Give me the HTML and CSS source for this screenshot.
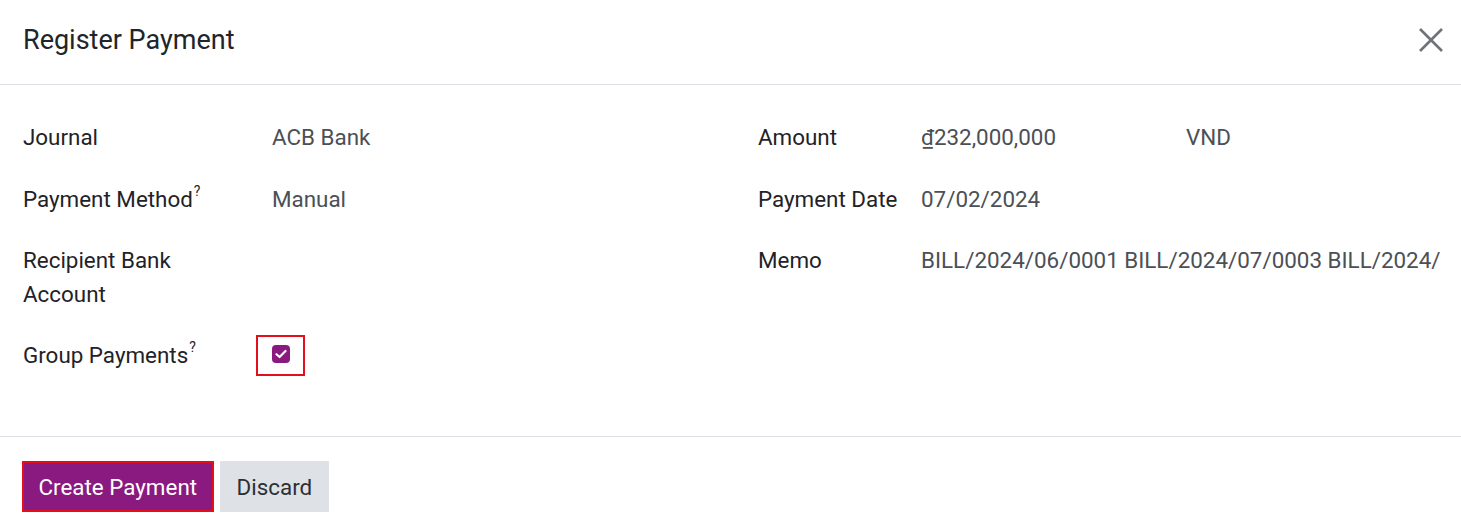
FILE: index.html
```html
<!DOCTYPE html>
<html lang="en">
<head>
<meta charset="utf-8">
<title>Register Payment</title>
<link rel="stylesheet" href="styles.css">
</head>
<body>
<div class="modal">
  <header class="modal-header">
    <h1 class="modal-title">Register Payment</h1>
    <button class="close" aria-label="Close">
      <svg width="24" height="24" viewBox="0 0 24 24"><path d="M1 1 L23 23 M23 1 L1 23" stroke="#6f7377" stroke-width="2.6" fill="none"/></svg>
    </button>
  </header>
  <main class="modal-body">
    <div class="group group-left">
      <div class="label">Journal</div>
      <div class="value">ACB Bank</div>
      <div class="label">Payment Method<sup class="help">?</sup></div>
      <div class="value">Manual</div>
      <div class="label">Recipient Bank<br>Account</div>
      <div class="value"></div>
      <div class="label">Group Payments<sup class="help">?</sup></div>
      <div class="value check-cell">
        <span class="check-wrap">
          <span class="checkbox">
            <svg width="12" height="10" viewBox="0 0 12 10"><path d="M1.5 5.2 L4.6 8 L10.5 2" stroke="#fff" stroke-width="2.2" fill="none" stroke-linecap="round" stroke-linejoin="round"/></svg>
          </span>
          <span class="highlight"></span>
        </span>
      </div>
    </div>
    <div class="group group-right">
      <div class="label">Amount</div>
      <div class="value amount"><span class="amount-num">₫232,000,000</span><span>VND</span></div>
      <div class="label">Payment Date</div>
      <div class="value">07/02/2024</div>
      <div class="label">Memo</div>
      <div class="value memo">BILL/2024/06/0001 BILL/2024/07/0003 BILL/2024/</div>
    </div>
  </main>
  <footer class="modal-footer">
    <button class="btn btn-primary">Create Payment</button>
    <button class="btn btn-secondary">Discard</button>
  </footer>
</div>
</body>
</html>
```
FILE: styles.css
```css
* { box-sizing: border-box; }
html, body { margin: 0; padding: 0; background: #fff; }
body {
  font-family: Roboto, "Liberation Sans", sans-serif;
  font-size: 22.4px;
  color: #212529;
  width: 1461px;
  overflow: hidden;
}
.modal { width: 1461px; }
.modal-header {
  height: 85px;
  border-bottom: 1px solid #dee2e6;
  display: flex;
  align-items: center;
  justify-content: space-between;
  padding: 0 18px 5px 23px;
}
.modal-title {
  margin: 0;
  font-size: 27px;
  font-weight: 400;
  line-height: 34px;
  color: #212529;
}
.close {
  border: 0;
  background: none;
  padding: 0;
  width: 24px;
  height: 24px;
  display: flex;
  cursor: pointer;
}
.modal-body {
  display: flex;
  padding: 35px 0 64px 23px;
  border-bottom: 1px solid #dee2e6;
}
.group {
  display: grid;
  row-gap: 27px;
  grid-template-rows: 35px;
  line-height: 34px;
  align-content: start;
}
.group-left { width: 735px; grid-template-columns: 249px 1fr; }
.group-right { grid-template-columns: 163px 1fr; }
.label { color: #1f2328; white-space: nowrap; }
.value { color: #4b5056; white-space: nowrap; }
.help {
  font-size: 14px;
  line-height: 0;
  vertical-align: 0;
  position: relative;
  top: -11px;
  margin-left: 1px;
}
.amount { display: flex; }
.amount-num { width: 265px; }
.memo { width: 522px; overflow: hidden; }
.check-cell { display: flex; align-items: flex-start; }
.check-wrap {
  position: relative;
  display: block;
  padding-top: 7px;
}
.checkbox {
  width: 18px;
  height: 18px;
  border-radius: 4px;
  background: #8a1a80;
  display: flex;
  align-items: center;
  justify-content: center;
}
.highlight {
  position: absolute;
  left: -16px;
  top: -3px;
  width: 49px;
  height: 41px;
  border: 2.5px solid #e3101c;
}
.modal-footer {
  display: flex;
  gap: 6px;
  padding: 24px 0 0 22px;
}
.btn {
  font-family: Roboto, "Liberation Sans", sans-serif;
  font-size: 22.4px;
  line-height: 34px;
  height: 51px;
  border: 0;
  white-space: nowrap;
  cursor: pointer;
}
.btn-primary {
  background: #8a1a80;
  color: #fff;
  border: 2.5px solid #e3101c;
  padding: 0 14.5px;
}
.btn-secondary {
  background: #dee1e5;
  color: #2c3035;
  padding: 0 17px;
}
```
